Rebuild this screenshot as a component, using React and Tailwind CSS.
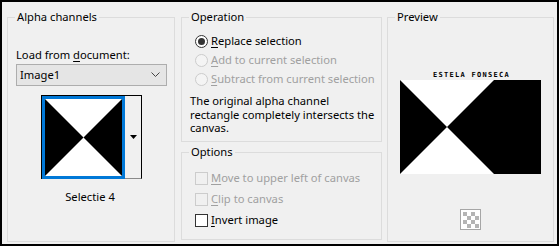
import React from "react";

// Windows-style dialog: alpha channel load

const Group = ({ title, className = "", children }) => (
  <fieldset className={`border border-[#dcdcdc] ${className}`}>
    <legend className="ml-[7px] px-[2px] leading-[16px] text-[#000]">{title}</legend>
    {children}
  </fieldset>
);

const Radio = ({ checked, disabled, children }) => (
  <div className="flex items-center h-[19px] ml-[13px]">
    <span
      className={`w-[13px] h-[13px] rounded-full border flex items-center justify-center ${
        disabled ? "border-[#cccccc] bg-[#f4f4f4]" : "border-[#333333] bg-white"
      }`}
    >
      {checked && <span className="w-[7px] h-[7px] rounded-full bg-[#333333]" />}
    </span>
    <span className={`ml-[3px] ${disabled ? "text-[#a0a0a0]" : "text-black"}`}>{children}</span>
  </div>
);

const Check = ({ disabled, children }) => (
  <div className="flex items-center h-[21px] ml-[13px]">
    <span
      className={`w-[13px] h-[13px] border ${
        disabled ? "border-[#cccccc] bg-[#f0f0f0]" : "border-[#333333] bg-white"
      }`}
    />
    <span className={`ml-[3px] ${disabled ? "text-[#a0a0a0]" : "text-black"}`}>{children}</span>
  </div>
);

const U = ({ children }) => <span className="underline underline-offset-2">{children}</span>;

export default function App() {
  return (
    <div
      className="w-[559px] h-[246px] border-2 border-black bg-[#f0f0f0] flex gap-[6px] pl-[5px] pr-[3px] pt-[7px] pb-[4px] text-[11.2px] text-black whitespace-nowrap"
      style={{ fontFamily: '"Noto Sans", "Liberation Sans", sans-serif' }}
    >
      {/* Alpha channels */}
      <Group title="Alpha channels" className="w-[168px] h-[233px]">
        <div className="ml-[8px] mt-[22px] leading-[16px]">
          Load from <U>d</U>ocument:
        </div>
        <div className="ml-[8px] mt-[1px] w-[151px] h-[22px] border border-[#adadad] bg-[#e5e5e5] flex items-center justify-between pl-[3px] pr-[6px]">
          <span>Image1</span>
          <svg width="9" height="6" viewBox="0 0 9 6">
            <polyline points="0.5,0.5 4.5,4.5 8.5,0.5" fill="none" stroke="#444" strokeWidth="1" />
          </svg>
        </div>
        <div className="ml-[33px] mt-[9px] flex items-start">
          <div className="border-l border-t border-black pt-0">
            <div className="w-[83px] h-[83px] border-[3px] border-[#0078d7] bg-white">
              <svg width="77" height="77" viewBox="0 0 77 77" className="block">
                <polygon points="0,0 38.5,38.5 0,77" fill="#000" />
                <polygon points="77,0 38.5,38.5 77,77" fill="#000" />
              </svg>
            </div>
          </div>
          <div className="w-[17px] h-[84px] border-t border-r border-b border-t-black border-r-black border-b-[#8a8a8a] flex items-center justify-center">
            <svg width="7" height="4" viewBox="0 0 7 4">
              <polygon points="0,0 7,0 3.5,4" fill="#000" />
            </svg>
          </div>
        </div>
        <div className="text-center mt-[10px] ml-[-2px] leading-[16px]">Selectie 4</div>
      </Group>

      {/* Operation + Options */}
      <div className="flex flex-col gap-[2px] w-[201px]">
        <Group title="Operation" className="h-[133px]">
          <div className="mt-[7px]">
            <Radio checked>
              <U>R</U>eplace selection
            </Radio>
            <Radio disabled>
              <U>A</U>dd to current selection
            </Radio>
            <Radio disabled>
              <U>S</U>ubtract from current selection
            </Radio>
          </div>
          <p className="ml-[8px] mt-[5px] leading-[13.5px]">
            The original alpha channel
            <br />
            rectangle completely intersects the
            <br />
            canvas.
          </p>
        </Group>
        <Group title="Options" className="flex-1">
          <div className="mt-[8px]">
            <Check disabled>
              <U>M</U>ove to upper left of canvas
            </Check>
            <Check disabled>
              <U>C</U>lip to canvas
            </Check>
            <Check>
              <U>I</U>nvert image
            </Check>
          </div>
        </Group>
      </div>

      {/* Preview */}
      <Group title="Preview" className="w-[167px] h-[233px] ml-[-1px]">
        <div className="flex flex-col items-center">
          <div
            className="mt-[46px] ml-[2px] text-[7px] leading-[8px] font-bold tracking-[1.3px] text-black"
            style={{ fontFamily: '"DejaVu Sans Mono", monospace' }}
          >
            ESTELA FONSECA
          </div>
          <svg width="141" height="94" viewBox="0 0 141 94" className="mt-[1px] block">
            <rect width="141" height="94" fill="#000" />
            <polygon points="0,0 94,0 47,47" fill="#fff" />
            <polygon points="0,94 47,47 94,94" fill="#fff" />
          </svg>
          <svg width="21" height="21" viewBox="0 0 21 21" className="mt-[35px] block">
            <rect x="0.5" y="0.5" width="20" height="20" fill="#fff" stroke="#a6a6a6" />
            {[0, 1, 2, 3].map((r) =>
              [0, 1, 2, 3].map((c) =>
                (r + c) % 2 === 0 ? (
                  <rect key={`${r}-${c}`} x={3 + c * 4} y={3 + r * 4} width="4" height="4" fill="#b4b4b4" />
                ) : null
              )
            )}
          </svg>
        </div>
      </Group>
    </div>
  );
}
